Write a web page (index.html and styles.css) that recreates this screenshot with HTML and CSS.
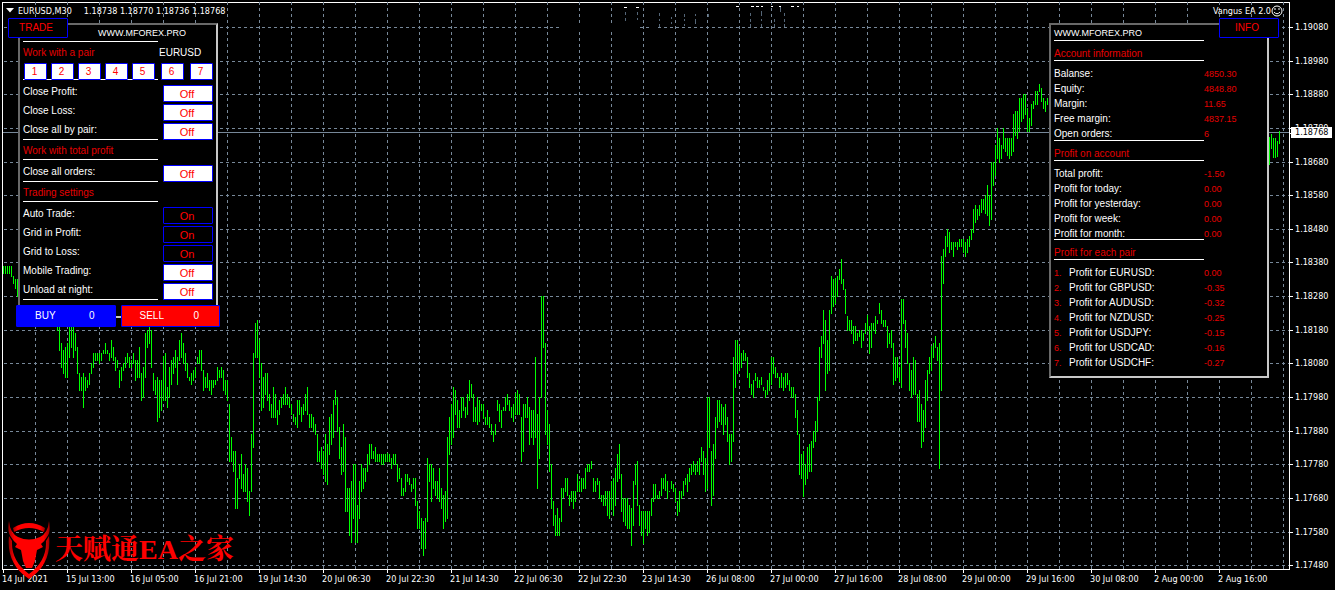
FILE: index.html
```html
<!DOCTYPE html>
<html lang="en">
<head>
<meta charset="utf-8">
<title>EURUSD,M30</title>
<link rel="stylesheet" href="styles.css">
</head>
<body>
<main class="terminal">
  <section class="plot" aria-label="EURUSD M30 chart">
    <svg class="chart" id="chart" aria-hidden="true">
      <path class="grid" id="grid-h"/>
      <path class="grid" id="grid-v"/>
      <path class="blank" d="M560 25h80v4h-80zM650 25h8v4h-8z"/>
      <g class="specks">
        <path d="M624 7.500h3M636 7.500h3M736 6.500h3M751 6.500h3M756 6.500h3M761 6.500h2M771 6.500h2M779 6.500h2M791 6.500h3M797 6.500h2"/>
        <path class="dim" d="M625.500 12v3M625.500 18v3M637.500 12v3M637.500 18v2M659.500 13v3M659.500 19v2M659.500 24v3M671.500 17v2M671.500 22v2M684.500 14v3M684.500 19v2M684.500 24v2M695.500 14v2M695.500 19v5M708.500 14v3M750.500 13v3M750.500 19v3M750.500 24v3M761.500 11v5M761.500 19v2M761.500 24v3M774.500 19v3M774.500 24v3M784.500 13v3M784.500 19v3M784.500 24v3M780.500 7v5"/>
      </g>
      <path class="bid" d="M3 132.500H4000"/>
      <path class="bars" id="bars"/>
    </svg>

    <header class="title">
      <svg class="caret" viewBox="0 0 8 5" aria-hidden="true"><path d="M0 0h8L4 4.500z"/></svg>
      <span>EURUSD,M30</span>
      <span class="quote">1.18738 1.18770 1.18736 1.18768</span>
      <span class="expert">Vangus EA 2.0</span>
      <svg class="smile" viewBox="0 0 12 12" aria-hidden="true"><circle cx="6" cy="6" r="5"/><path d="M4 3v2M8 3v2M3 7q3 3.500 6 0"/></svg>
    </header>

    <section class="panel trade">
      <button class="tab">TRADE</button>
      <div class="site">WWW.MFOREX.PRO</div>
      <hr>
      <div class="heading pair"><span>Work with a pair</span><span class="symbol">EURUSD</span></div>
      <div class="numbers">
        <button>1</button><button>2</button><button>3</button><button>4</button><button>5</button><button class="far">6</button><button class="far">7</button>
      </div>
      <hr class="under">
      <div class="rows">
        <div class="row"><label for="cp">Close Profit:</label><button id="cp" class="off">Off</button></div>
        <div class="row"><label for="cl">Close Loss:</label><button id="cl" class="off">Off</button></div>
        <div class="row"><label for="ca">Close all by pair:</label><button id="ca" class="off">Off</button></div>
      </div>
      <hr class="tuck">
      <div class="heading">Work with total profit</div>
      <hr>
      <div class="rows">
        <div class="row"><label for="co">Close all orders:</label><button id="co" class="off">Off</button></div>
      </div>
      <hr class="tuck">
      <div class="heading">Trading settings</div>
      <hr>
      <div class="rows">
        <div class="row"><label for="at">Auto Trade:</label><button id="at">On</button></div>
        <div class="row"><label for="gp">Grid in Profit:</label><button id="gp">On</button></div>
        <div class="row"><label for="gl">Grid to Loss:</label><button id="gl">On</button></div>
        <div class="row"><label for="mt">Mobile Trading:</label><button id="mt" class="off">Off</button></div>
        <div class="row"><label for="un">Unload at night:</label><button id="un" class="off">Off</button></div>
      </div>
      <hr class="tuck">
      <div class="deal">
        <button class="buy"><span>BUY</span><span>0</span></button>
        <button class="sell"><span>SELL</span><span>0</span></button>
      </div>
    </section>

    <section class="panel info">
      <button class="tab">INFO</button>
      <div class="site">WWW.MFOREX.PRO</div>
      <hr>
      <div class="heading">Account information</div>
      <hr>
      <table>
        <tr><th>Balanse:</th><td>4850.30</td></tr>
        <tr><th>Equity:</th><td>4848.80</td></tr>
        <tr><th>Margin:</th><td>11.65</td></tr>
        <tr><th>Free margin:</th><td>4837.15</td></tr>
        <tr><th>Open orders:</th><td>6</td></tr>
      </table>
      <hr>
      <div class="heading">Profit on account</div>
      <hr>
      <table>
        <tr><th>Total profit:</th><td>-1.50</td></tr>
        <tr><th>Profit for today:</th><td>0.00</td></tr>
        <tr><th>Profit for yesterday:</th><td>0.00</td></tr>
        <tr><th>Profit for week:</th><td>0.00</td></tr>
        <tr><th>Profit for month:</th><td>0.00</td></tr>
      </table>
      <hr class="tuck">
      <div class="heading">Profit for each pair</div>
      <hr>
      <table class="pairs">
        <tr><td class="n">1.</td><th>Profit for EURUSD:</th><td>0.00</td></tr>
        <tr><td class="n">2.</td><th>Profit for GBPUSD:</th><td>-0.35</td></tr>
        <tr><td class="n">3.</td><th>Profit for AUDUSD:</th><td>-0.32</td></tr>
        <tr><td class="n">4.</td><th>Profit for NZDUSD:</th><td>-0.25</td></tr>
        <tr><td class="n">5.</td><th>Profit for USDJPY:</th><td>-0.15</td></tr>
        <tr><td class="n">6.</td><th>Profit for USDCAD:</th><td>-0.16</td></tr>
        <tr><td class="n">7.</td><th>Profit for USDCHF:</th><td>-0.27</td></tr>
      </table>
    </section>
  </section>

  <aside class="prices" id="prices"><span class="current">1.18768</span></aside>
  <footer class="times" id="times"></footer>

  <div class="brand">
    <svg viewBox="0 0 42 58" aria-hidden="true">
      <defs><linearGradient id="shade" x1="0" x2="1" y1="0" y2="0"><stop offset="0" stop-color="#900"/><stop offset=".15" stop-color="#f00"/><stop offset=".85" stop-color="#f00"/><stop offset="1" stop-color="#900"/></linearGradient></defs>
      <path fill="url(#shade)" d="M5 7Q21-3 37 7L36 11Q21 3 6 11z"/>
      <path fill="url(#shade)" d="M1 0Q2 12 10 16Q21 21 32 16Q40 12 41 0Q43 11 39 16Q36 21 33 23L35 26L29 29Q28 34 27 40L24 47H18L15 40Q14 34 13 29L7 26L9 23Q6 21 3 16Q-1 11 1 0z"/>
      <path fill="url(#shade)" d="M1 15L4 20Q3 40 21 53Q39 40 38 20L41 15Q44 43 21 58Q-2 43 1 15z"/>
    </svg>
    <span>天赋通EA之家</span>
  </div>
</main>
<script src="chart.js"></script>
</body>
</html>
```
FILE: styles.css
```css
* { box-sizing: border-box; }

body {
  margin: 0;
  background: #000;
  color: #fff;
  font: 10px/12px "Liberation Sans", Arial, sans-serif;
}

.terminal {
  position: relative;
  display: grid;
  grid-template-columns: minmax(0, 1fr) 45px;
  grid-template-rows: minmax(568px, 1fr) 20px;
  min-height: 100vh;
  padding-top: 2px;
  overflow: hidden;
}

.plot {
  position: relative;
  margin-left: 2px;
  border: 1px solid #fff;
}

.chart {
  position: absolute;
  top: -3px;
  left: -3px;
  width: calc(100% + 3px);
  height: calc(100% + 3px);
  fill: none;
  shape-rendering: crispEdges;
}

.grid { stroke: #789; stroke-dasharray: 3; }
.blank { fill: #000; }
.specks { stroke: #fff; }
.specks .dim { stroke: #567; }
.bid { stroke: #789; }
.bars { stroke: #0f0; }

.title, .prices, .times {
  font-family: "DejaVu Sans Condensed", "Noto Sans", sans-serif;
  font-size: 9px;
}

.title {
  position: relative;
  display: flex;
  align-items: center;
  height: 15px;
  padding: 0 6px 0 3px;
}

.caret { width: 8px; height: 5px; margin-right: 4px; fill: #fff; }
.quote { margin-left: 12px; }
.expert { margin-left: auto; }
.smile { width: 12px; height: 12px; fill: none; stroke: #fff; }

.panel {
  position: absolute;
  top: 20px;
  padding: 0 3px;
  background: #000;
  border: 2px solid;
  border-color: #696969 #c8c8c8 #c8c8c8 #696969;
}

.trade { left: 15px; width: 200px; }
.info { right: 20px; width: 220px; height: 355px; }

button {
  margin: 0;
  padding: 0;
  background: #000;
  color: #f00;
  border: 1px solid #00f;
  border-radius: 1px;
  font: inherit;
}

.tab {
  position: absolute;
  top: -7px;
  width: 60px;
  height: 20px;
  padding-right: 4px;
}

.trade .tab { left: -12px; }
.info .tab { right: -12px; }

hr {
  width: 135px;
  height: 1px;
  margin: 0;
  border: 0;
  background: #fff;
}

.info hr { width: 150px; }
hr.under { margin-top: -1px; }
hr.tuck { margin-top: -2px; }

.site { height: 16px; font-size: 9px; line-height: 16px; }
.trade .site { padding-left: 75px; }
.info .site { height: 15px; }

.heading {
  height: 19px;
  padding-top: 5px;
  color: #e60000;
}

.info .heading { padding-top: 7px; }

.pair { display: flex; height: 21px; }
.symbol { position: absolute; left: 139px; color: #fff; }

.numbers {
  position: relative;
  z-index: 1;
  display: flex;
  gap: 4px;
  padding-left: 1px;
}

.numbers button { width: 23px; height: 17px; padding-right: 2px; background: #fff; }
.numbers .far { margin-left: 2px; }

.rows { padding-top: 4px; }
.row { display: flex; justify-content: space-between; align-items: center; height: 19px; }
.row label { padding-bottom: 4px; }
.row button { width: 50px; height: 17px; padding-right: 2px; font-size: 11px; }
.row .off { background: #fff; }

.deal {
  position: relative;
  display: flex;
  gap: 5px;
  margin: 5px -7px -11px;
}

.deal button {
  display: flex;
  flex: 1;
  align-items: center;
  justify-content: space-between;
  height: 22px;
  padding: 0 20px 0 18px;
  color: #fff;
}

.buy { background: #00f; }
.sell { background: #f00; }

table {
  width: 100%;
  margin-top: 5px;
  margin-bottom: -1px;
  border-collapse: collapse;
  table-layout: fixed;
}

tr { height: 15px; }
th, td { padding: 0; font-weight: 400; text-align: left; }
th { width: 150px; }
td { color: #e60000; font-size: 9px; }
.n { width: 15px; }
.pairs th { width: 135px; }

.prices { position: relative; }

.prices span {
  position: absolute;
  left: 1px;
  padding-left: 4px;
}

.prices span::before {
  position: absolute;
  top: 6px;
  left: -1px;
  width: 3px;
  height: 1px;
  background: #fff;
  content: "";
}

.prices .current {
  z-index: 1;
  top: 125px;
  width: 41px;
  height: 11px;
  background: #fff;
  color: #000;
  line-height: 11px;
}

.times {
  grid-column: 1 / -1;
  display: flex;
  padding-left: 2px;
  overflow: hidden;
}

.times span {
  position: relative;
  flex: 0 0 64px;
  padding-top: 3px;
  white-space: nowrap;
}

.times span::before {
  position: absolute;
  top: 0;
  left: 1px;
  width: 1px;
  height: 3px;
  background: #fff;
  content: "";
}

.brand {
  position: absolute;
  bottom: 11px;
  left: 8px;
  display: flex;
  align-items: center;
  gap: 5px;
  color: #f00;
  font: 700 28px/36px "Liberation Serif", "Noto Serif CJK SC", "Noto Sans CJK SC", serif;
}

.brand svg { width: 42px; height: 58px; }
```
FILE: chart.js
```js
// High-low bars, two pixels apart. Each run: first x, y origin, then
// "high-low" pairs measured in thirds of a pixel below the origin.
const runs = [
  [3, 160, "318-342 318-342 318-342 318-342 318-351 348-372 358-388 358-410"],
  [57, 320, "0-33 0-93 69-144 90-162 80-174 69-174 0-114 0-84 0-114 39-93 81-162 159-213 171-213 159-264 171-213 180-204 159-195 129-162 99-144 99-123 99-123 99-132 99-123 90-102 69-102 90-102 99-123 60-114 81-123 111-153 120-144 150-204 141-183 129-153 111-144 99-129 111-144 120-144 99-132 120-183 120-174 81-174 159-243 141-234 39-174 30-84 20-72 30-144 159-213 180-225 171-306 180-294 180-273 108-243 99-243 201-264 141-234 120-195 111-162 90-144 111-195 60-123 39-114 69-132 99-153 129-174 171-183 159-195 150-183 141-174 111-132 90-132 90-153 150-213 171-204 159-204 180-213 180-225 180-204 180-195 141-183 150-174 141-174 150-213 180-225 180-243 252-426 351-426 393-456 393-567 474-567 432-477 402-507 462-516 432-516 444-546 513-588 342-516 99-384 9-114 0-114 60-174 129-273 171-264 159-225 159-243 222-273 252-294 201-294 222-294 270-315 240-285 231-264 222-255 201-255 222-255 231-264 252-285 282-306 291-315 240-324 240-285"],
  [301, 280, "381-426 372-405 342-393 321-405 402-444 402-444 411-456 432-465 462-546 513-546 501-567 513-585 462-606 492-615 411-525 402-495 360-474 330-375 351-456 441-537 501-585 432-576 471-696 624-696 624-768 603-789 552-717 552-789 675-789 603-717 552-636 564-627 564-606 522-576 492-555 492-537 513-537 501-546 522-546 522-546 522-555 522-555 522-546 520-546 522-546 534-567 522-555 522-555 552-606 564-597 594-648 624-648 582-636 582-606 594-615 612-636 594-627 594-678 663-747 693-747 714-807 723-828 714-807 534-726 552-606 552-666 564-627 603-648 603-657 564-666 624-687 645-747 633-726 471-717 411-525 372-495 321-474 330-405 360-444 390-444 351-414 351-393 381-414 342-405 300-363 312-354 342-426 381-426 351-435 360-426 372-393 372-417 411-435 390-435 411-444 432-465 453-486 432-465 360-393 372-426 390-444 381-393 351-393 342-375 360-393 381-414 372-426 339-405 330-405 342-405 411-546 372-516 372-414 351-414 381-495 390-474 390-495 231-474 402-627 351-537 48-354 48-204 189-465 390-495 432-576 552-687 663-738 705-768 684-768 714-768 624-726 624-654 594-636 594-648 645-678 633-666 633-687 633-666 582-636 603-636 594-636 594-627 564-627 552-576 552-576 543-567 594-636 603-636 594-615 603-657"],
  [601, 380, "345-366 345-378 333-378 333-408 333-417 303-390 294-408 264-378 222-306 192-297 282-396 354-426 354-438 354-447 375-447 384-498 303-438 252-315 243-378 375-438 393-468 393-492 393-447 393-468 393-459 354-408 312-366 312-357 345-357 333-357 294-348 294-327 282-333 303-357 333-336 303-327 312-336 324-366 363-408 333-396 333-357 303-348 294-315 282-336 264-306"],
  [691, 240, "672-705 663-696 672-705 663-696 654-705 621-666 633-705 654-756 471-747 471-624 633-798 612-768 531-657 480-564 480-546 492-555 501-585 492-555 531-606 582-675 582-666 351-606 300-444 300-402 318-393 339-384 330-363 339-363 351-414 399-444 432-465 420-474 399-423 411-444 420-444 411-435 441-453 450-474 420-465 399-453 351-435 351-402 381-414 399-414 411-444 399-444 411-453 399-444 399-435 420-453 441-474 441-474 462-534 510-585 582-705 642-717 633-771 672-735 621-717 612-696 603-696 573-624 543-606 471-576 321-483 288-354 210-312 240-453 300-402 210-393 108-222 117-201 114-192 108-171 87-120 57-132 117-150 147-222 228-273 240-273 240-282 258-312 258-303 279-303 270-291 270-324 279-303 249-282 225-273 258-342 249-324 249-273 228-282 240-252 189-222 210-252 240-261 240-261 258-324 279-312 270-324 309-435 351-423 351-414 381-426 177-444 177-252 240-324 279-372 369-453 390-474 351-465 360-465 462-546 450-546 492-624 510-606 420-564 390-483 351-402 318-393 309-354 288-324 321-363 309-687 48-453 27-132"],
  [945, 70, "498-561 477-531 486-549 516-540 516-561 516-531 516-540 507-531 507-531 507-549 516-561 507-549 498-531 477-510 417-489 405-459 417-450 405-438 387-429 387-420 375-432 345-438 375-468 276-450 276-348 225-318 174-267 204-279 225-267 174-237 204-246 204-258 204-267 204-258 132-246 123-198 123-207 84-186 84-156 72-147 72-135 114-186 144-186 102-168 93-117 63-105 63-105 42-66 54-96 84-117 93-126 84-105"],
  [1269, 0, "411-495 402-447 414-474 414-474 423-471 393-432"]
];

let bars = "";
for (const [x, y, list] of runs) {
  list.split(" ").forEach((pair, i) => {
    const [high, low] = pair.split("-").map(v => y + Math.round(v / 3));
    bars += `M${x + i * 2 + 0.5} ${high}V${low}`;
  });
}
document.getElementById("bars").setAttribute("d", bars);

const levels = [27, 61, 94, 128, 162, 195, 229, 262, 296, 330, 363, 397, 431, 464, 498, 532, 565];
document.getElementById("grid-h").setAttribute("d", levels.map(y => `M4 ${y + 0.5}H4000`).join(""));

let columns = "";
for (let x = 35; x < 4000; x += 32) columns += `M${x + 0.5} 2V2000`;
document.getElementById("grid-v").setAttribute("d", columns);

const prices = document.getElementById("prices");
levels.forEach((y, i) => {
  const label = document.createElement("span");
  label.textContent = (1.1908 - i * 0.001).toFixed(5);
  label.style.top = `${y - 8}px`;
  prices.append(label);
});

const times = document.getElementById("times");
["14 Jul 2021", "15 Jul 13:00", "16 Jul 05:00", "16 Jul 21:00", "19 Jul 14:30", "20 Jul 06:30", "20 Jul 22:30",
 "21 Jul 14:30", "22 Jul 06:30", "22 Jul 22:30", "23 Jul 14:30", "26 Jul 08:00", "27 Jul 00:00", "27 Jul 16:00",
 "28 Jul 08:00", "29 Jul 00:00", "29 Jul 16:00", "30 Jul 08:00", "2 Aug 00:00", "2 Aug 16:00"].forEach(text => {
  const label = document.createElement("span");
  label.textContent = text;
  times.append(label);
});
```
